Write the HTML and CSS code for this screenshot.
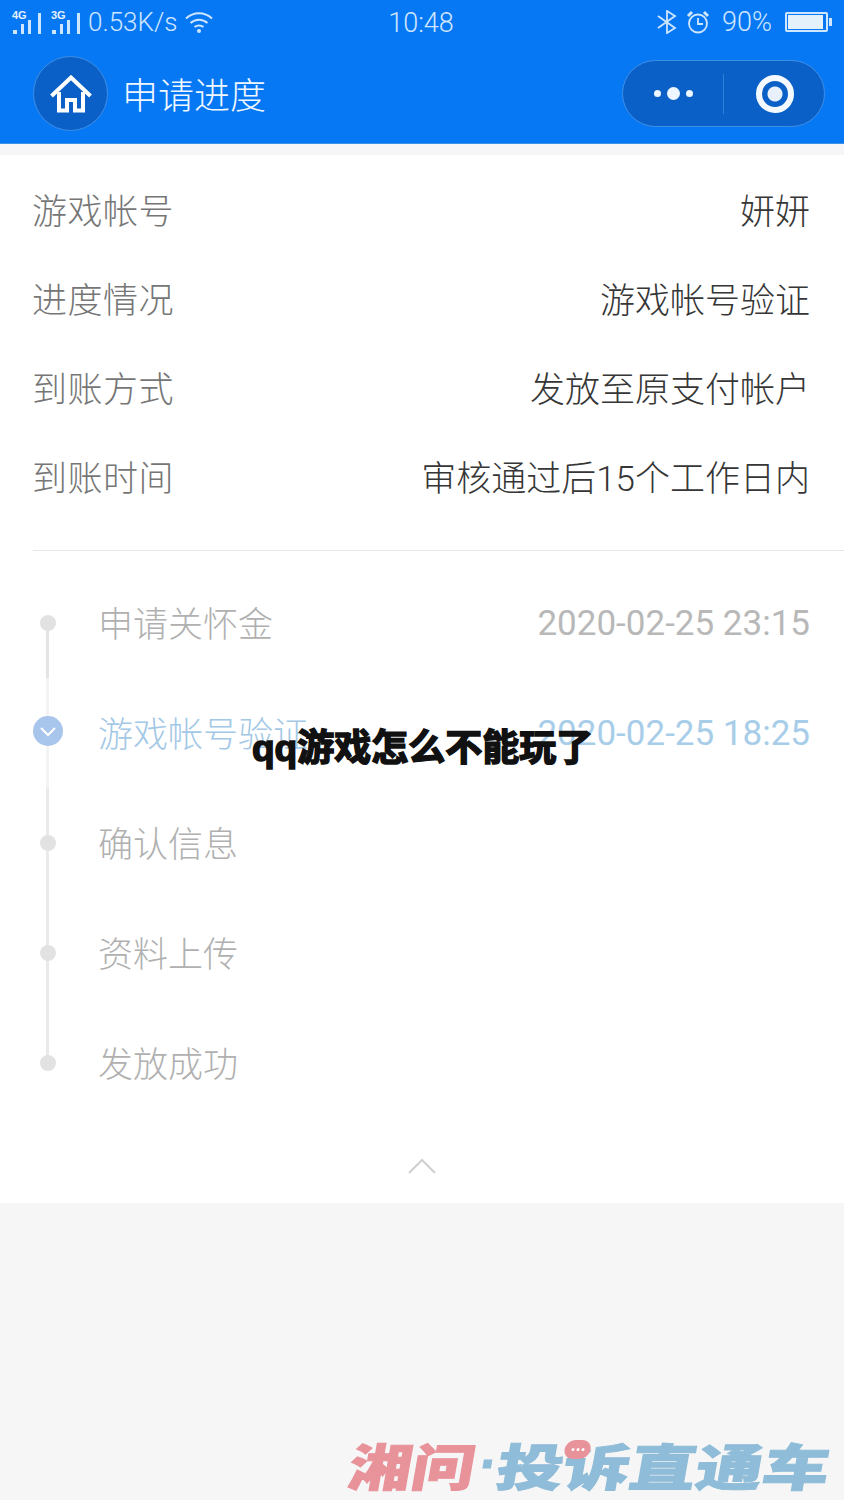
FILE: index.html
```html
<!DOCTYPE html>
<html lang="zh">
<head>
<meta charset="utf-8">
<title>申请进度</title>
<link rel="stylesheet" href="styles.css">
</head>
<body>
<div class="page">
  <header class="top">
    <div class="status">
      <div class="status-left">
        <span class="sim"><b>4G</b><svg width="32" height="26" viewBox="0 0 32 26"><path d="M1 21h4v4H1zM9 15h3v10H9zM16 11h3v14h-3zM26 4h3v21h-3z" fill="#cfe6ff"/></svg></span>
        <span class="sim"><b>3G</b><svg width="32" height="26" viewBox="0 0 32 26"><path d="M1 21h4v4H1zM9 15h3v10H9zM16 11h3v14h-3zM26 4h3v21h-3z" fill="#cfe6ff"/></svg></span>
        <span class="speed">0.53K/s</span>
        <svg class="wifi" width="30" height="24" viewBox="0 0 30 24" fill="none" stroke="#cfe6ff" stroke-width="2"><path d="M2 8.500C9.500 1.500 20.500 1.500 28 8.500M6.500 13C11.500 8.500 18.500 8.500 23.500 13M10.500 17C13 15 17 15 19.500 17"/><circle cx="15" cy="21" r="2" fill="#cfe6ff" stroke="none"/></svg>
      </div>
      <div class="clock">10:48</div>
      <div class="status-right">
        <svg width="22" height="24" viewBox="0 0 22 24" fill="none" stroke="#cfe6ff" stroke-width="1.800"><path d="M2 6l17 12-8 5V1l8 5L2 18"/></svg>
        <svg width="24" height="24" viewBox="0 0 24 24" fill="none" stroke="#cfe6ff" stroke-width="1.800"><circle cx="12" cy="13.500" r="9"/><path d="M12 8v6h5"/><path d="M2 6l4-4M22 6l-4-4" stroke-width="3"/></svg>
        <span class="pct">90%</span>
        <span class="battery"><i class="battery-fill"></i></span>
      </div>
    </div>
    <div class="nav">
      <div class="home">
        <svg width="42" height="38" viewBox="0 0 42 38" fill="none" stroke="#fff" stroke-width="4"><path d="M1.500 21L21 2.500 40.500 21"/><path d="M9 17v18.500h8V25h8v10.500h8V17"/></svg>
      </div>
      <h1 class="nav-title">申请进度</h1>
      <div class="capsule">
        <div class="dots"><i class="dot"></i><i class="dot dot-big"></i><i class="dot"></i></div>
        <i class="cap-sep"></i>
        <div class="target"><i class="target-core"></i></div>
      </div>
    </div>
  </header>
  <div class="band"></div>
  <main class="card">
    <section class="info">
      <div class="row"><span class="label">游戏帐号</span><span class="value">妍妍</span></div>
      <div class="row"><span class="label">进度情况</span><span class="value">游戏帐号验证</span></div>
      <div class="row"><span class="label">到账方式</span><span class="value">发放至原支付帐户</span></div>
      <div class="row"><span class="label">到账时间</span><span class="value">审核通过后15个工作日内</span></div>
    </section>
    <section class="timeline">
      <div class="step first"><span class="node"><i class="dot-grey"></i></span><span class="step-name">申请关怀金</span><span class="step-time">2020-02-25 23:15</span></div>
      <div class="step active"><span class="node"><span class="check"><svg width="18" height="12" viewBox="0 0 18 12" fill="none" stroke="#fff" stroke-width="2"><path d="M2 2l7 7 7-7"/></svg></span></span><span class="step-name">游戏帐号验证</span><span class="step-time">2020-02-25 18:25</span></div>
      <div class="step"><span class="node"><i class="dot-grey"></i></span><span class="step-name">确认信息</span></div>
      <div class="step"><span class="node"><i class="dot-grey"></i></span><span class="step-name">资料上传</span></div>
      <div class="step last"><span class="node"><i class="dot-grey"></i></span><span class="step-name">发放成功</span></div>
    </section>
    <div class="collapse"><svg width="28" height="16" viewBox="0 0 28 16" fill="none" stroke="#cfcfcf" stroke-width="2"><path d="M1 15L14 2l13 13"/></svg></div>
  </main>
  <footer class="foot">
    <div class="logo"><span class="logo-red"><span class="logo-inner">湘问</span></span><span class="logo-dot">·</span><span class="logo-blue"><span class="logo-inner">投诉直通车</span></span>
      <span class="bubble"><i></i><i></i><i></i></span>
    </div>
  </footer>
  <div class="overlay-title">qq游戏怎么不能玩了</div>
</div>
</body>
</html>
```
FILE: styles.css
```css
* { box-sizing: border-box; }
html, body { margin: 0; padding: 0; }
body { font-family: "Roboto", "Noto Sans CJK SC", sans-serif; background: #f6f6f6; }
i { display: block; }
.page { position: relative; width: 844px; height: 1500px; overflow: hidden; display: flex; flex-direction: column; }

.top { height: 144px; background: #0778f3; border-bottom: 1px solid #3f8fe6; flex: none; }
.status { height: 44px; display: grid; grid-template-columns: 1fr auto 1fr; align-items: center; padding: 0 14px 0 12px; color: #cfe6ff; }
.status-left { display: flex; align-items: center; gap: 7px; }
.status-right { display: flex; align-items: center; justify-content: flex-end; gap: 8px; }
.sim { position: relative; display: block; width: 32px; height: 26px; }
.sim svg { display: block; }
.sim b { position: absolute; left: 0; top: 0; font: 700 11px/12px "Liberation Sans", sans-serif; color: #e4f1ff; }
.speed { font-size: 26px; line-height: 30px; font-weight: 300; margin-left: -2px; }
.wifi { margin-left: 0; }
.clock { font-size: 27px; line-height: 30px; font-weight: 300; margin-top: 2px; }
.pct { font-size: 27px; line-height: 30px; font-weight: 300; margin: 0 5px 0 4px; }
.battery { display: block; position: relative; width: 43px; height: 20px; border: 2px solid #cfe6ff; border-radius: 2px; padding: 1px; margin-right: 2px; }
.battery::after { content: ""; position: absolute; right: -6px; top: 4px; width: 3px; height: 8px; background: #cfe6ff; }
.battery-fill { width: 35px; height: 14px; background: #e4f1fb; }

.nav { height: 99px; display: flex; align-items: center; padding: 0 19px 0 33px; }
.home { width: 75px; height: 75px; border-radius: 50%; background: #0a60c6; border: 1px solid #3f8fe6; display: flex; align-items: center; justify-content: center; }
.nav-title { margin: 0 0 2px 14px; font-size: 36px; line-height: 44px; font-weight: 300; color: #f0f7ff; font-family: "Noto Sans CJK SC", sans-serif; flex: 1; }
.capsule { width: 203px; height: 67px; border-radius: 34px; background: #0a60c6; border: 1px solid #3f8fe6; display: flex; align-items: center; }
.dots { width: 100px; display: flex; align-items: center; justify-content: center; gap: 6px; }
.dot { width: 7px; height: 7px; border-radius: 50%; background: #eef6ff; }
.dot-big { width: 13px; height: 13px; }
.cap-sep { width: 1px; height: 40px; background: #2f80dc; }
.target { flex: 1; padding-left: 2px; display: flex; align-items: center; justify-content: center; }
.target-core { width: 38px; height: 38px; border-radius: 50%; border: 6px solid #f4f9ff; background: radial-gradient(circle, #e8f1fb 0 7px, #0a60c6 8px); }

.band { height: 11px; background: #f6f5f8; flex: none; }
.card { height: 1048px; flex: none; background: #fff; display: flex; flex-direction: column; font-family: "Noto Sans CJK SC", sans-serif; }
.info { margin-left: 33px; height: 396px; flex: none; padding-top: 9px; border-bottom: 1px solid #e6e6e6; }
.row { height: 89px; display: flex; align-items: center; justify-content: space-between; padding-right: 34px; font-size: 35px; font-weight: 300; }
.label { color: #767676; margin-left: -1px; letter-spacing: 0.5px; }
.value { color: #363636; font-family: "Roboto", "Noto Sans CJK SC", sans-serif; }

.timeline { padding: 17px 34px 0 33px; flex: none; }
.step { position: relative; height: 110px; display: flex; align-items: center; font-size: 35px; font-weight: 300; color: #b0b0b0; }
.node { width: 30px; display: flex; justify-content: center; position: relative; z-index: 1; margin-right: 35px; }
.step::before { content: ""; position: absolute; left: 13px; top: 0; bottom: 0; width: 3px; background: #eaeaea; }
.step.first::before { top: 50%; bottom: 0; background: #e4e4e4; }
.step.last::before { bottom: 50%; }
.step.active::before { background: #f3f3f3; }
.dot-grey { width: 16px; height: 16px; border-radius: 50%; background: #e2e2e2; }
.check { width: 30px; height: 30px; border-radius: 50%; background: #a8c5ec; display: flex; align-items: center; justify-content: center; margin-top: -4px; }
.check svg { margin-top: 2px; }
.step-name { flex: 1; margin-top: -4px; }
.step-time { font-family: "Roboto", sans-serif; font-weight: 400; color: #b8b8b8; font-size: 35px; }
.active { color: #a3c8e6; }
.active .step-time { color: #a7cde9; }

.collapse { flex: 1; display: flex; align-items: flex-start; justify-content: center; padding-top: 40px; }

.foot { flex: 1; display: flex; align-items: flex-end; justify-content: flex-end; padding: 0 14px 10px 0; }
.logo { position: relative; display: flex; align-items: center; width: 480px; height: 52px; transform: skewX(-10deg); font: 900 50px/52px "Noto Sans CJK SC", sans-serif; white-space: nowrap; }
.logo-red { color: #e8929a; width: 130px; flex: none; }
.logo-dot { color: #8fbcd8; width: 18px; flex: none; display: flex; justify-content: center; font: 700 60px/52px "Liberation Sans", sans-serif; }
.logo-blue { color: #8fbcd8; width: 332px; flex: none; }
.logo-inner { display: inline-block; transform-origin: left center; -webkit-text-stroke: 1px currentColor; }
.logo-red .logo-inner { transform: scaleX(1.26); }
.logo-blue .logo-inner { transform: scaleX(1.33); }
.bubble { position: absolute; left: 212px; top: 2px; width: 26px; height: 19px; border-radius: 10px; background: #e8929a; display: flex; gap: 2px; align-items: center; justify-content: center; }
.bubble i { width: 3px; height: 3px; border-radius: 50%; background: #fff; }

.overlay-title { position: absolute; left: 252px; top: 723px; font: 700 37px/52px "Liberation Sans", "Noto Sans CJK SC", sans-serif; color: #111; white-space: nowrap; -webkit-text-stroke: 1.6px #111; }
```
